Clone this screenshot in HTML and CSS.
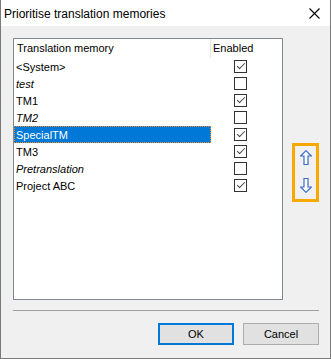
FILE: index.html
```html
<!DOCTYPE html>
<html>
<head>
<meta charset="utf-8">
<link rel="stylesheet" href="styles.css">
</head>
<body>
<div class="window">
  <div class="titlebar">
    <span class="title">Prioritise translation memories</span>
    <svg class="close" width="11" height="11" viewBox="0 0 11 11"><path d="M0.5 0.5 L10.5 10.5 M10.5 0.5 L0.5 10.5" stroke="#000" stroke-width="1.1" fill="none"/></svg>
  </div>
  <div class="body">
    <div class="main">
      <div class="list">
        <div class="row header">
          <div class="c1">Translation memory</div>
          <div class="c2 hdr2">Enabled</div>
        </div>
        <div class="row"><div class="c1">&lt;System&gt;</div><div class="c2"><span class="cb on"></span></div></div>
        <div class="row"><div class="c1 it">test</div><div class="c2"><span class="cb"></span></div></div>
        <div class="row"><div class="c1">TM1</div><div class="c2"><span class="cb on"></span></div></div>
        <div class="row"><div class="c1 it">TM2</div><div class="c2"><span class="cb"></span></div></div>
        <div class="row"><div class="c1 sel">SpecialTM</div><div class="c2"><span class="cb on"></span></div></div>
        <div class="row"><div class="c1">TM3</div><div class="c2"><span class="cb on"></span></div></div>
        <div class="row"><div class="c1 it">Pretranslation</div><div class="c2"><span class="cb"></span></div></div>
        <div class="row"><div class="c1">Project ABC</div><div class="c2"><span class="cb on"></span></div></div>
      </div>
      <div class="side">
        <div class="arrows">
          <svg width="12" height="15" viewBox="0 0 12 15"><path d="M6 0.7 L11.3 6 L8 6 L8 14.5 L4 14.5 L4 6 L0.7 6 Z" fill="#fff" stroke="#3a6cc6" stroke-width="1.2" stroke-linejoin="miter"/></svg>
          <svg width="12" height="15" viewBox="0 0 12 15"><path d="M6 14.3 L11.3 9 L8 9 L8 0.5 L4 0.5 L4 9 L0.7 9 Z" fill="#fff" stroke="#3a6cc6" stroke-width="1.2" stroke-linejoin="miter"/></svg>
        </div>
      </div>
    </div>
    <div class="sep"></div>
    <div class="buttons">
      <button class="btn ok">OK</button>
      <button class="btn">Cancel</button>
    </div>
  </div>
</div>
</body>
</html>
```

FILE: styles.css
```css
* { box-sizing: border-box; }
html, body { margin: 0; padding: 0; }
body {
  width: 331px;
  height: 359px;
  font-family: "Liberation Sans", Arial, sans-serif;
  font-size: 11px;
  color: #000;
  background: #f0f0f0;
}
.window {
  width: 331px;
  height: 359px;
  border-left: 1px solid #7a7a7a;
  border-right: 1px solid #7a7a7a;
  border-bottom: 1px solid #7a7a7a;
  display: flex;
  flex-direction: column;
  background: #f0f0f0;
}
.titlebar {
  height: 26px;
  background: #fff;
  display: flex;
  align-items: center;
  justify-content: space-between;
  padding: 0 10px 0 3px;
}
.title {
  font-size: 12px;
  margin-top: 1px;
}
.close { display: block; margin-top: 1px; }
.body {
  flex: 1;
  padding: 12px 11px 13px 12px;
  display: flex;
  flex-direction: column;
}
.main {
  display: flex;
  height: 262px;
}
.list {
  width: 270px;
  height: 262px;
  background: #fff;
  border: 1px solid #828790;
}
.row {
  display: flex;
  height: 17px;
}
.row.header {
  height: 19px;
}
.c1 {
  width: 197px;
  padding-left: 2px;
  line-height: 18px;
  white-space: nowrap;
}
.header .c1 {
  padding-left: 3px;
  line-height: 19px;
  border-right: 1px solid #e5e5e5;
}
.c2 {
  flex: 1;
  display: flex;
  align-items: center;
  padding-left: 23px;
}
.hdr2 {
  padding-left: 2px;
  line-height: 19px;
  color: #000;
}
.it { font-style: italic; }
.sel {
  background: #0078d7;
  color: #fff;
  outline: 1px dotted #f08a24;
  outline-offset: -1px;
}
.cb {
  display: block;
  width: 13px;
  height: 13px;
  border: 1px solid #333;
  background: #fff;
  position: relative;
}
.cb.on::after {
  content: "";
  position: absolute;
  left: 2px;
  top: 2px;
  width: 7px;
  height: 3px;
  border-left: 1.6px solid #444;
  border-bottom: 1.6px solid #444;
  transform: rotate(-45deg);
}
.side {
  flex: 1;
  display: flex;
  justify-content: flex-end;
  align-items: flex-start;
  padding-top: 105px;
}
.arrows {
  width: 27px;
  height: 59px;
  border: 3px solid #f7a900;
  display: flex;
  flex-direction: column;
  align-items: center;
  justify-content: space-between;
  padding: 4px 0 6px 0;
}
.arrows svg { display: block; }
.sep {
  height: 1px;
  background: #a0a0a0;
  margin-top: 10px;
}
.buttons {
  display: flex;
  justify-content: flex-end;
  gap: 9px;
  margin-top: 12px;
}
.btn {
  width: 76px;
  height: 22px;
  background: #e1e1e1;
  border: 1px solid #adadad;
  font-family: "Liberation Sans", Arial, sans-serif;
  font-size: 11px;
  color: #000;
  padding: 0;
  margin: 0;
}
.btn.ok {
  border: 2px solid #0078d7;
}
```
